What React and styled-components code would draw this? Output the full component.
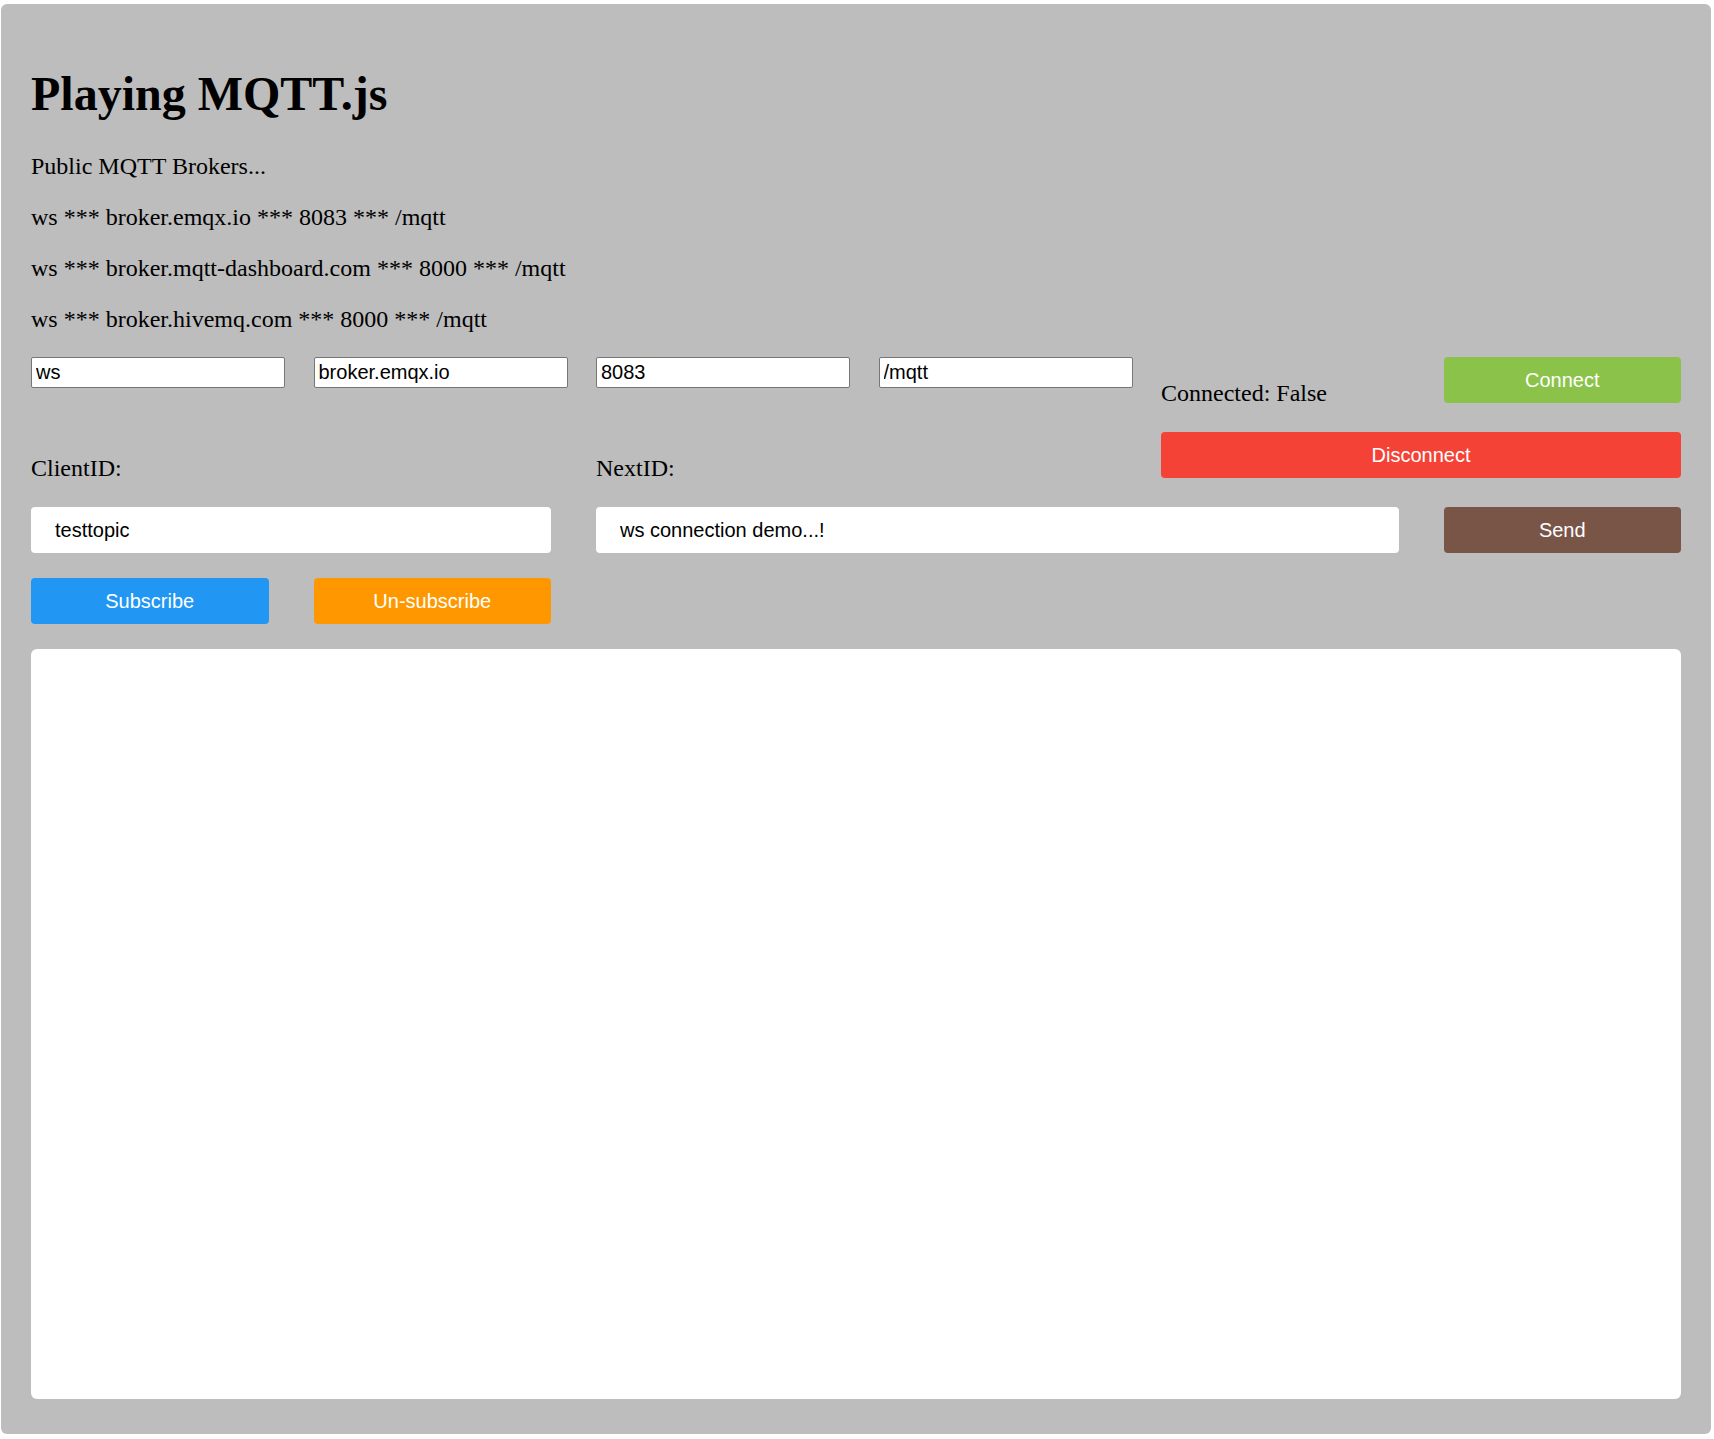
import React, { useState } from "react";
import styled, { createGlobalStyle } from "styled-components";

const GlobalStyle = createGlobalStyle`
    body {
        margin: 0;
        background: #ffffff;
        font-family: "Liberation Serif", "Times New Roman", serif;
        color: #000;
    }
`

const Panel = styled.div`
    box-sizing: border-box;
    width: 1710px;
    margin: 4px 0 5px 1px;
    padding: 30px 30px 35px;
    background-color: #bdbdbd;
    border-radius: 6px;
    display: flow-root;
`

const Title = styled.h1`
    font-size: 48px;
    font-weight: bold;
    margin: 32px 0;
`

const Line = styled.p`
    font-size: 24px;
    margin: 24px 0;
`

const Controls = styled.div`
    display: grid;
    grid-template-columns: repeat(6, 1fr);
    grid-template-rows: 50px 50px 46px 46px;
    column-gap: 45px;
    row-gap: 25px;
    margin-top: 24px;
`

const Cell = styled.div`
    grid-column: ${p => p.col} / span ${p => p.span || 1};
    grid-row: ${p => p.row};
    align-self: ${p => p.end ? "end" : "start"};
    min-width: 0;
`

const Label = styled.div`
    font-size: 24px;
    line-height: 27px;
    margin-bottom: ${p => p.shift || 0}px;
`

const SmallInput = styled.input`
    box-sizing: border-box;
    width: 254px;
    height: 31px;
    padding: 1px 4px;
    border: 1px solid #767676;
    border-radius: 2px;
    background: #fff;
    font-family: "Liberation Sans", Arial, sans-serif;
    font-size: 20px;
    color: #000;
    outline: none;
`

const WideInput = styled.input`
    box-sizing: border-box;
    display: block;
    width: 100%;
    height: 46px;
    padding: 0 24px;
    border: none;
    border-radius: 4px;
    background: #fff;
    font-family: "Liberation Sans", Arial, sans-serif;
    font-size: 20px;
    color: #000;
    outline: none;
`

const Button = styled.button`
    display: block;
    width: 100%;
    height: 46px;
    border: none;
    border-radius: 4px;
    background-color: ${p => p.color};
    color: #fff;
    font-family: "Liberation Sans", Arial, sans-serif;
    font-size: 20px;
    cursor: pointer;
`

const Log = styled.textarea`
    box-sizing: border-box;
    display: block;
    width: 100%;
    height: 750px;
    margin-top: 25px;
    border: none;
    border-radius: 6px;
    background: #fff;
    resize: none;
    outline: none;
    padding: 12px;
    font-family: "Liberation Mono", monospace;
    font-size: 16px;
`

const brokers = [
    ["ws", "broker.emqx.io", "8083", "/mqtt"],
    ["ws", "broker.mqtt-dashboard.com", "8000", "/mqtt"],
    ["ws", "broker.hivemq.com", "8000", "/mqtt"],
]

const App = () => {
    const [protocol, setProtocol] = useState("ws");
    const [host, setHost] = useState("broker.emqx.io");
    const [port, setPort] = useState("8083");
    const [path, setPath] = useState("/mqtt");
    const [topic, setTopic] = useState("testtopic");
    const [message, setMessage] = useState("ws connection demo...!");
    const [connected] = useState(false);

    return (
        <>
            <GlobalStyle />
            <Panel>
                <Title>Playing MQTT.js</Title>
                <Line>Public MQTT Brokers...</Line>
                {brokers.map(b => (
                    <Line key={b[1]}>{b.join(" *** ")}</Line>
                ))}

                <Controls>
                    <Cell col={1} row={1}><SmallInput value={protocol} onChange={e => setProtocol(e.target.value)} /></Cell>
                    <Cell col={2} row={1}><SmallInput value={host} onChange={e => setHost(e.target.value)} /></Cell>
                    <Cell col={3} row={1}><SmallInput value={port} onChange={e => setPort(e.target.value)} /></Cell>
                    <Cell col={4} row={1}><SmallInput value={path} onChange={e => setPath(e.target.value)} /></Cell>
                    <Cell col={5} row={1} end><Label shift={0}>Connected: {connected ? "True" : "False"}</Label></Cell>
                    <Cell col={6} row={1}><Button color="#8bc34a">Connect</Button></Cell>

                    <Cell col={1} span={2} row={2} end><Label>ClientID:</Label></Cell>
                    <Cell col={3} span={2} row={2} end><Label>NextID:</Label></Cell>
                    <Cell col={5} span={2} row={2}><Button color="#f44336">Disconnect</Button></Cell>

                    <Cell col={1} span={2} row={3}><WideInput value={topic} onChange={e => setTopic(e.target.value)} /></Cell>
                    <Cell col={3} span={3} row={3}><WideInput value={message} onChange={e => setMessage(e.target.value)} /></Cell>
                    <Cell col={6} row={3}><Button color="#795548">Send</Button></Cell>

                    <Cell col={1} row={4}><Button color="#2196f3">Subscribe</Button></Cell>
                    <Cell col={2} row={4}><Button color="#ff9800">Un-subscribe</Button></Cell>
                </Controls>

                <Log readOnly value="" />
            </Panel>
        </>
    )
}

export default App;
